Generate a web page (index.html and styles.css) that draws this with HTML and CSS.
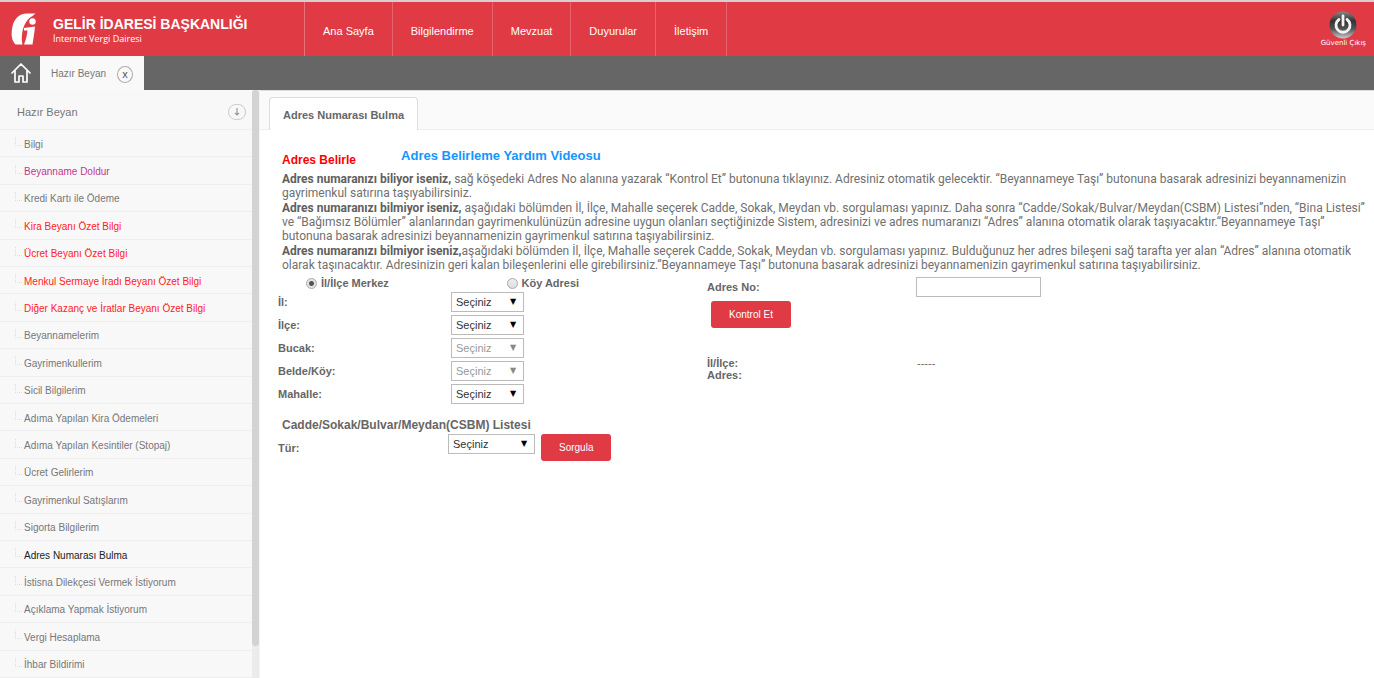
FILE: index.html
```html
<!DOCTYPE html>
<html lang="tr">
<head>
<meta charset="utf-8">
<title>Gelir İdaresi Başkanlığı - İnternet Vergi Dairesi</title>
<link rel="stylesheet" href="styles.css">
</head>
<body>
<header class="topbar">
  <a class="brand" href="#">
    <svg class="brand-logo" viewBox="0 0 26 34" aria-hidden="true">
      <path d="M24.500 1.500L21.500 4C17 6 13 12 11.500 19C10.500 25 10.500 29 11.500 32.500L4.500 32.500C1 29 0 24 1 17C2.500 7 8 1.500 16 1.500Z"/>
      <path d="M13 16L24 14.500C23.500 20 22.500 26 21.500 32.500L13 32.500C15 28 16 23 16.500 18.500L13 18.500Z"/>
      <circle cx="21.500" cy="9.500" r="3.200"/>
    </svg>
    <span class="brand-text">
      <strong class="brand-name">GELİR İDARESİ BAŞKANLIĞI</strong>
      <span class="brand-sub">İnternet Vergi Dairesi</span>
    </span>
  </a>
  <nav class="mainnav">
    <a href="#">Ana Sayfa</a>
    <a href="#">Bilgilendirme</a>
    <a href="#">Mevzuat</a>
    <a href="#">Duyurular</a>
    <a href="#">İletişim</a>
  </nav>
  <a class="logout" href="#">
    <svg class="logout-icon" viewBox="0 0 28 28" aria-hidden="true">
      <defs>
        <linearGradient id="metal" x1="0" y1="0" x2="0" y2="1">
          <stop offset="0" stop-color="#888"/>
          <stop offset=".35" stop-color="#333"/>
          <stop offset=".65" stop-color="#555"/>
          <stop offset="1" stop-color="#ccc"/>
        </linearGradient>
      </defs>
      <circle cx="14" cy="14" r="13.500" fill="url(#metal)"/>
      <path d="M10 8.500A7 7 0 1 0 18 8.500M14 5V14" fill="none" stroke="#f4f4f4" stroke-width="2.800" stroke-linecap="round"/>
    </svg>
    <span>Güvenli Çıkış</span>
  </a>
</header>
<div class="tabstrip">
  <a class="home" href="#" aria-label="Ana sayfa">
    <svg viewBox="0 0 20 22" aria-hidden="true">
      <path d="M1 11L10 2L19 11M4 9V20H8V14H12V20H16V9" fill="none" stroke="#fff" stroke-width="1.700" stroke-linejoin="round" stroke-linecap="round"/>
    </svg>
  </a>
  <div class="apptab">
    <span>Hazır Beyan</span>
    <button class="close" type="button" aria-label="Sekmeyi kapat">x</button>
  </div>
</div>
<div class="workspace">
  <aside class="sidebar">
    <div class="side-main">
      <div class="side-head">
        <span>Hazır Beyan</span>
        <button class="collapse" type="button" aria-label="Menüyü daralt">
          <svg viewBox="0 0 8 8" aria-hidden="true"><path d="M4 0V7M2 5L4 7L6 5" fill="none" stroke="#999" stroke-width="1.200"/></svg>
        </button>
      </div>
      <ul class="side-list">
        <li><a href="#">Bilgi</a></li>
        <li><a class="visited" href="#">Beyanname Doldur</a></li>
        <li><a href="#">Kredi Kartı ile Ödeme</a></li>
        <li><a class="alert" href="#">Kira Beyanı Özet Bilgi</a></li>
        <li><a class="alert" href="#">Ücret Beyanı Özet Bilgi</a></li>
        <li><a class="alert" href="#">Menkul Sermaye İradı Beyanı Özet Bilgi</a></li>
        <li><a class="alert" href="#">Diğer Kazanç ve İratlar Beyanı Özet Bilgi</a></li>
        <li><a href="#">Beyannamelerim</a></li>
        <li><a href="#">Gayrimenkullerim</a></li>
        <li><a href="#">Sicil Bilgilerim</a></li>
        <li><a href="#">Adıma Yapılan Kira Ödemeleri</a></li>
        <li><a href="#">Adıma Yapılan Kesintiler (Stopaj)</a></li>
        <li><a href="#">Ücret Gelirlerim</a></li>
        <li><a href="#">Gayrimenkul Satışlarım</a></li>
        <li><a href="#">Sigorta Bilgilerim</a></li>
        <li><a class="current" href="#">Adres Numarası Bulma</a></li>
        <li><a href="#">İstisna Dilekçesi Vermek İstiyorum</a></li>
        <li><a href="#">Açıklama Yapmak İstiyorum</a></li>
        <li><a href="#">Vergi Hesaplama</a></li>
        <li><a href="#">İhbar Bildirimi</a></li>
      </ul>
    </div>
    <div class="scroll-track"><div class="scroll-thumb"></div></div>
  </aside>
  <main class="content">
    <div class="page-tabs"><a class="page-tab" href="#">Adres Numarası Bulma</a></div>
    <div class="titles">
      <h1 class="title">Adres Belirle</h1>
      <a class="video" href="#">Adres Belirleme Yardım Videosu</a>
    </div>
    <div class="help">
      <p><b>Adres numaranızı biliyor iseniz,</b> sağ köşedeki Adres No alanına yazarak “Kontrol Et” butonuna tıklayınız. Adresiniz otomatik gelecektir. “Beyannameye Taşı” butonuna basarak adresinizi beyannamenizin gayrimenkul satırına taşıyabilirsiniz.</p>
      <p><b>Adres numaranızı bilmiyor iseniz,</b> aşağıdaki bölümden İl, İlçe, Mahalle seçerek Cadde, Sokak, Meydan vb. sorgulaması yapınız. Daha sonra “Cadde/Sokak/Bulvar/Meydan(CSBM) Listesi”nden, “Bina Listesi” ve “Bağımsız Bölümler” alanlarından gayrimenkulünüzün adresine uygun olanları seçtiğinizde Sistem, adresinizi ve adres numaranızı “Adres” alanına otomatik olarak taşıyacaktır.“Beyannameye Taşı” butonuna basarak adresinizi beyannamenizin gayrimenkul satırına taşıyabilirsiniz.</p>
      <p><b>Adres numaranızı bilmiyor iseniz,</b>aşağıdaki bölümden İl, İlçe, Mahalle seçerek Cadde, Sokak, Meydan vb. sorgulaması yapınız. Bulduğunuz her adres bileşeni sağ tarafta yer alan “Adres” alanına otomatik olarak taşınacaktır. Adresinizin geri kalan bileşenlerini elle girebilirsiniz.“Beyannameye Taşı” butonuna basarak adresinizi beyannamenizin gayrimenkul satırına taşıyabilirsiniz.</p>
    </div>
    <form class="forms">
      <div class="left">
        <div class="radios">
          <label><input type="radio" name="tip" checked> İl/İlçe Merkez</label>
          <label><input type="radio" name="tip"> Köy Adresi</label>
        </div>
        <div class="field"><label for="il">İl:</label><select id="il"><option>Seçiniz</option></select></div>
        <div class="field"><label for="ilce">İlçe:</label><select id="ilce"><option>Seçiniz</option></select></div>
        <div class="field"><label for="bucak">Bucak:</label><select id="bucak" disabled><option>Seçiniz</option></select></div>
        <div class="field"><label for="belde">Belde/Köy:</label><select id="belde" disabled><option>Seçiniz</option></select></div>
        <div class="field"><label for="mahalle">Mahalle:</label><select id="mahalle"><option>Seçiniz</option></select></div>
        <h2 class="subtitle">Cadde/Sokak/Bulvar/Meydan(CSBM) Listesi</h2>
        <div class="query"><label for="tur">Tür:</label><select id="tur"><option>Seçiniz</option></select><button class="btn" type="button">Sorgula</button></div>
      </div>
      <div class="right">
        <div class="number"><label for="adresno">Adres No:</label><input id="adresno" type="text"></div>
        <button class="btn btn-check" type="button">Kontrol Et</button>
        <dl class="result">
          <dt>İl/İlçe:</dt><dd>-----</dd>
          <dt>Adres:</dt><dd></dd>
        </dl>
      </div>
    </form>
  </main>
</div>
</body>
</html>
```

FILE: styles.css
```css
* { box-sizing: border-box; }

body {
  margin: 0;
  min-height: 100vh;
  display: flex;
  flex-direction: column;
  background: #fff;
  color: #666;
  font: 11px/14px "Liberation Sans", Arial, sans-serif;
}

a { color: inherit; text-decoration: none; }
button, select, input { font: inherit; }

/* Header */
.topbar {
  display: flex;
  height: 56px;
  border-top: 2px solid #d5cfcf;
  background: #e03a45;
  color: #fff;
}
.brand {
  display: flex;
  width: 304px;
  padding: 10px 0 0 11px;
  gap: 16px;
}
.brand-logo { width: 26px; height: 34px; fill: #fff; }
.brand-text { display: flex; flex-direction: column; padding-top: 5px; }
.brand-name { font-size: 14px; line-height: 15px; }
.brand-sub { font: 9px/14px "Open Sans", sans-serif; }
.mainnav { display: flex; border-left: 1px solid #e8727a; }
.mainnav a {
  display: flex;
  align-items: center;
  padding: 4px 18px 0;
  border-right: 1px solid #e8626c;
  white-space: nowrap;
}
.logout {
  display: flex;
  flex-direction: column;
  align-items: center;
  margin-left: auto;
  padding: 9px 8px 0 0;
  font: 7px/9px "DejaVu Sans", sans-serif;
}
.logout-icon { width: 28px; height: 28px; }

/* Application tabs */
.tabstrip { display: flex; height: 34px; background: #666; }
.home { display: flex; align-items: center; width: 40px; padding-left: 11px; }
.home svg { width: 20px; height: 22px; }
.apptab {
  display: flex;
  align-items: center;
  gap: 11px;
  padding: 2px 11px 0;
  background: #f9f9f9;
  color: #777;
  font-size: 10px;
}
.close {
  width: 16px;
  height: 17px;
  padding: 0;
  border: 1px solid #aaa;
  border-radius: 50%;
  background: none;
  color: #555;
  font-size: 11px;
  line-height: 12px;
}

/* Sidebar */
.workspace { display: flex; flex: 1; }
.sidebar { display: flex; width: 260px; flex: none; background: #f8f8f8; color: #777; }
.side-main { display: flex; flex: 1; flex-direction: column; }
.side-head {
  display: flex;
  align-items: center;
  justify-content: space-between;
  height: 40px;
  padding: 5px 6px 0 17px;
  border-bottom: 1px solid #eee;
}
.collapse {
  display: grid;
  place-items: center;
  width: 18px;
  height: 16px;
  padding: 0;
  border: 1px solid #ccc;
  border-radius: 8px;
  background: none;
}
.collapse svg { width: 8px; height: 8px; }
.side-list {
  display: grid;
  flex: 1;
  grid-auto-rows: 1fr;
  margin: 0;
  padding: 0;
  list-style: none;
  font-size: 10px;
}
.side-list li { border-bottom: 1px solid #eee; display: flex; }
.side-list a { display: flex; flex: 1; align-items: center; padding: 3px 0 0 15px; gap: 2px; }
.side-list a::before {
  content: "";
  width: 6px;
  height: 8px;
  margin-bottom: 6px;
  border: 1px dotted #ddd;
  border-width: 0 0 1px 1px;
}
.side-list .visited { color: #c0398c; }
.side-list .alert { color: #f22; }
.side-list .current { color: #222; }
.scroll-track { width: 8px; background: #ececec; border-right: 1px solid #f4f4f4; }
.scroll-thumb { height: 556px; border-radius: 4px; background: #d3d3d3; }

/* Content */
.content { flex: 1; min-width: 0; }
.page-tabs {
  display: flex;
  align-items: flex-end;
  height: 40px;
  padding-left: 9px;
  border-top: 1px solid #ddd;
  border-bottom: 1px solid #eee;
  background: #fafafa;
}
.page-tab {
  height: 33px;
  margin-bottom: -1px;
  padding: 10px 13px 0;
  border: 1px solid #ddd;
  border-bottom: 0;
  border-radius: 4px 4px 0 0;
  background: #fff;
  font-weight: bold;
}
.titles { display: flex; gap: 45px; padding: 19px 22px 0; }
.title { margin: 4px 0 0; color: #f00; font-size: 12px; line-height: 14px; }
.video { color: #1496ff; font-size: 13px; font-weight: bold; line-height: 14px; }
.help {
  display: grid;
  gap: 1px;
  padding: 5px 6px 0 22px;
  color: #707070;
  font-family: Roboto, "Liberation Sans", sans-serif;
  font-size: 12px;
}
.help p { margin: 0; }
.help b { color: #606060; }

/* Forms */
.forms { display: flex; padding: 4px 16px 0 18px; }
.left { width: 429px; }
.radios { display: flex; padding-left: 28px; height: 14px; }
.radios label { display: flex; align-items: center; gap: 4px; width: 206px; font-weight: bold; }
.radios input {
  appearance: none;
  width: 11px;
  height: 11px;
  margin: 1px 0 0;
  border: 1px solid #aaa;
  border-radius: 50%;
  background: linear-gradient(#eee, #ddd);
}
.radios input:checked { background: radial-gradient(#555 0 2px, #e4e4e4 3px); }
label, dt { font-weight: bold; }
.field { display: flex; align-items: center; height: 23px; }
.field label { width: 173px; }
select {
  appearance: none;
  width: 73px;
  height: 20px;
  padding: 0 4px;
  border: 1px solid #bbb;
  border-radius: 0;
  background: #fff;
  color: #333;
}
.field, .query { position: relative; }
.field::after, .query::after {
  content: "▼";
  position: absolute;
  left: 232px;
  color: #000;
  font: 8px/14px "DejaVu Sans", sans-serif;
  pointer-events: none;
}
select:disabled { color: #999; opacity: 1; }
.field:has(:disabled)::after { color: #888; }
.subtitle { margin: 13px 0 0 4px; font-size: 12px; line-height: 14px; }
.query { display: flex; margin-top: 2px; align-items: flex-start; }
.query label { width: 170px; padding-top: 7px; }
.query select { width: 87px; margin-right: 6px; }
.query::after { left: 243px; top: 3px; }
.btn {
  height: 27px;
  padding: 0 18px;
  border: 0;
  border-radius: 3px;
  background: #e03a45;
  color: #fff;
  font-size: 10px;
}
.number { display: flex; align-items: center; padding-top: 1px; }
.number label { width: 209px; }
.number input { width: 125px; height: 20px; border: 1px solid #bbb; }
.btn-check { margin: 4px 0 0 4px; }
.result {
  display: grid;
  grid-template-columns: 210px 1fr;
  margin: 29px 0 0;
  line-height: 12px;
}
.result dd { margin: 0; }
```
